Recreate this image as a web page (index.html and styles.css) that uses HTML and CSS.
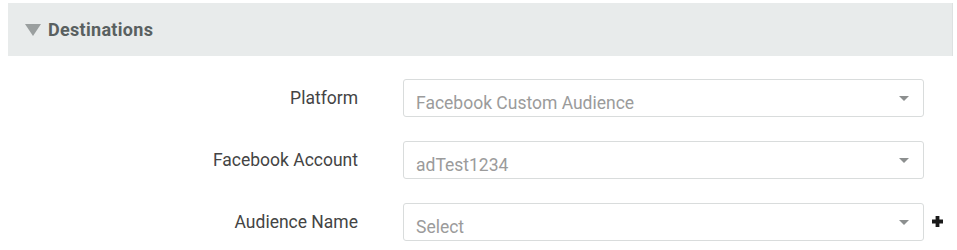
FILE: index.html
```html
<!DOCTYPE html>
<html>
<head>
<meta charset="utf-8">
<link rel="stylesheet" href="styles.css">
</head>
<body>
<div class="panel">
  <div class="panel-header">
    <span class="caret"></span>
    <span class="panel-title">Destinations</span>
  </div>
  <div class="form">
    <div class="row">
      <label class="label">Platform</label>
      <div class="select"><span class="value">Facebook Custom Audience</span><span class="arrow"></span></div>
      <span></span>
    </div>
    <div class="row">
      <label class="label">Facebook Account</label>
      <div class="select"><span class="value">adTest1234</span><span class="arrow"></span></div>
      <span></span>
    </div>
    <div class="row">
      <label class="label">Audience Name</label>
      <div class="select"><span class="value">Select</span><span class="arrow"></span></div>
      <svg class="plus" width="11" height="11" viewBox="0 0 11 11"><path d="M3.6 0h3.8v3.6H11v3.8H7.4V11H3.6V7.4H0V3.6h3.6z" fill="#1a1a1a"/></svg>
    </div>
  </div>
</div>
</body>
</html>
```
FILE: styles.css
```css
html, body {
  margin: 0;
  padding: 0;
  background: #fff;
}
body {
  padding: 3px 4px 0 8px;
  font-family: Roboto, "Liberation Sans", sans-serif;
}
.panel-header {
  height: 53px;
  background: #e8ebeb;
  border-right: 1px solid #dde1e1;
  display: flex;
  align-items: center;
  padding-left: 17px;
  box-sizing: border-box;
}
.caret {
  width: 0;
  height: 0;
  border-left: 8px solid transparent;
  border-right: 8px solid transparent;
  border-top: 12px solid #9a9f9f;
  margin-right: 7px;
  margin-top: 1px;
}
.panel-title {
  font-weight: 700;
  font-size: 18px;
  letter-spacing: 0.3px;
  color: #596060;
}
.form {
  padding-top: 23px;
  display: flex;
  flex-direction: column;
  gap: 24px;
}
.row {
  display: grid;
  grid-template-columns: 395px 521px 20px;
  align-items: center;
}
.label {
  text-align: right;
  padding-right: 45px;
  font-size: 17.5px;
  color: #444;
}
.select {
  height: 38px;
  border: 1px solid #d9dcdc;
  border-radius: 3px;
  box-sizing: border-box;
  display: flex;
  align-items: center;
  padding: 0 14px 0 12px;
}
.value {
  flex: 1;
  font-size: 17.5px;
  color: #9b9b9b;
  padding-top: 10px;
}
.arrow {
  width: 0;
  height: 0;
  border-left: 5.5px solid transparent;
  border-right: 5.5px solid transparent;
  border-top: 5px solid #8c8f8f;
}
.plus {
  margin-left: 8px;
  margin-top: -2px;
}
```
